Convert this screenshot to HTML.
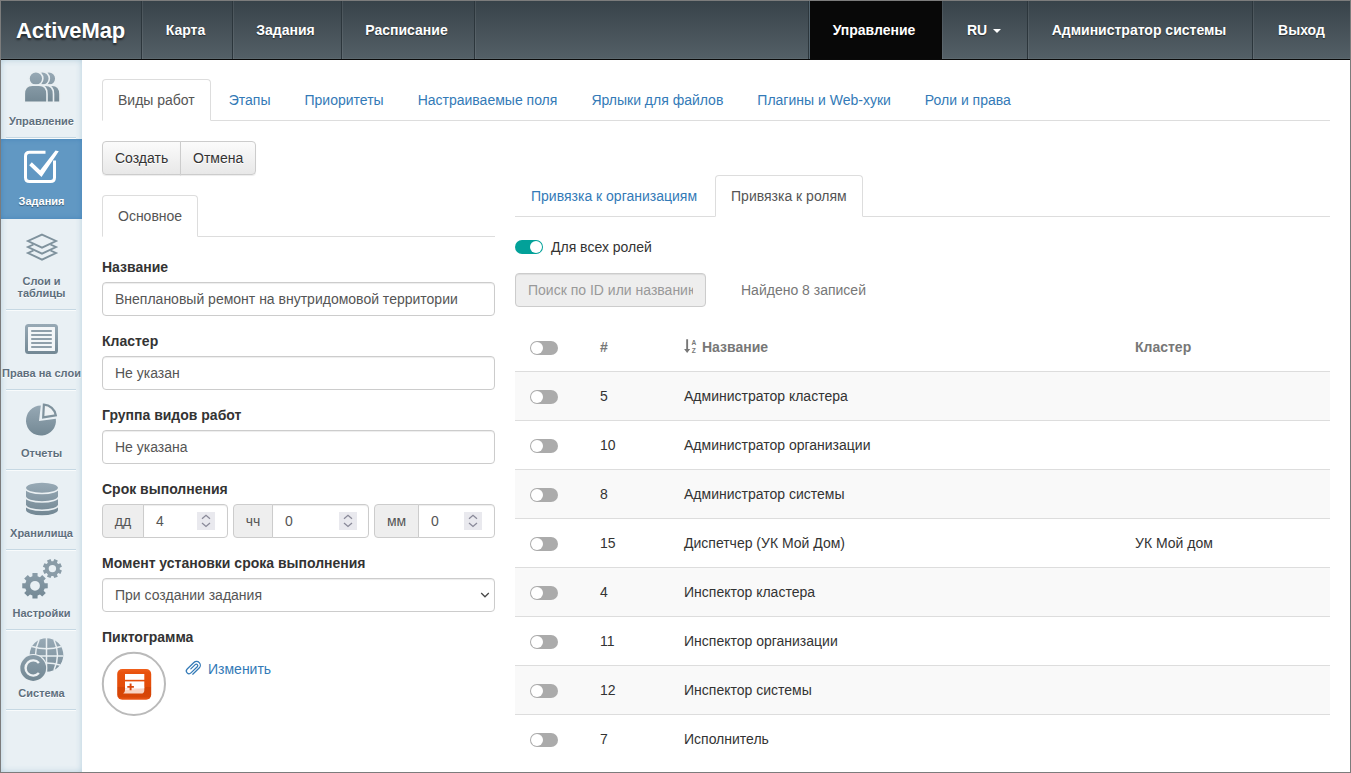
<!DOCTYPE html>
<html lang="ru">
<head>
<meta charset="utf-8">
<title>ActiveMap</title>
<style>
*{box-sizing:border-box}
html,body{margin:0;padding:0}
body{width:1351px;height:773px;overflow:hidden;position:relative;background:#fff;font-family:"Liberation Sans",Arial,sans-serif;font-size:14px;line-height:20px;color:#333}
a{color:#337ab7;text-decoration:none}
#frame{position:absolute;left:0;top:0;width:1351px;height:773px;border:1px solid #7c7c7c;z-index:50;pointer-events:none}
/* header */
#hdr{position:absolute;left:1px;top:1px;width:1349px;height:59px;background:linear-gradient(#38434a,#546067);border-bottom:1px solid #0a0a0a;box-shadow:inset 0 -1px 0 rgba(255,255,255,.05)}
#hdr .it{position:absolute;top:0;height:58px;line-height:59px;color:#fff;font-weight:bold;font-size:14px;text-align:center;border-left:1px solid #2c363c;box-shadow:inset 1px 0 0 rgba(255,255,255,.08);text-shadow:0 1px 1px rgba(0,0,0,.5);white-space:nowrap;padding-right:3px}
#brand{position:absolute;letter-spacing:-.1px;left:15px;top:0;height:58px;line-height:60px;font-size:22px;font-weight:bold;color:#fff;text-shadow:0 2px 2px rgba(0,0,0,.55)}
#hdr .act{background:#080808;box-shadow:inset 1px 0 0 #55656f}
.caret{display:inline-block;width:0;height:0;border-left:4px solid transparent;border-right:4px solid transparent;border-top:4px solid #fff;vertical-align:middle;margin-left:2px}
/* sidebar */
#side{position:absolute;left:1px;top:60px;width:81px;height:712px;background:#e9f0f4;box-shadow:inset 0 0 6px 0 #b5cfde}
#side .si{position:absolute;left:0;width:81px;height:80px;text-align:center;font-size:11px;font-weight:bold;color:#5e6f7d;line-height:12px}
#side .si .lb{position:absolute;left:0;width:81px;text-align:center;text-shadow:0 1px 0 #fff}
#side .si svg{position:absolute}
#side .sep{position:absolute;left:5px;width:70px;height:2px;background:linear-gradient(#c6d8e3 50%,#f8fbfc 50%)}
#side .on{background:#6198c3;box-shadow:inset 0 0 5px 0 #4685bb;color:#fff}
#side .on .lb{text-shadow:0 1px 1px rgba(0,0,0,.4)}
/* main */
.tabline{position:absolute;height:1px;background:#ddd}
.tabs{position:absolute;white-space:nowrap;font-size:0}
.tab{display:inline-block;height:42px;line-height:20px;padding:10px 15px;margin-right:2px;font-size:14px;white-space:nowrap;border:1px solid transparent;vertical-align:top;color:#337ab7}
.tab.on{border:1px solid #ddd;border-bottom:1px solid #fff;border-radius:4px 4px 0 0;color:#555;background:#fff}
.lbl{position:absolute;left:102px;font-weight:bold;font-size:14px;line-height:20px;white-space:nowrap}
.inp{position:absolute;height:34px;border:1px solid #ccc;border-radius:4px;background:#fff;box-shadow:inset 0 1px 1px rgba(0,0,0,.075);padding:6px 12px;line-height:20px;color:#555;white-space:nowrap;overflow:hidden}
.addon{position:absolute;height:34px;border:1px solid #ccc;border-radius:4px 0 0 4px;background:#eee;color:#555;text-align:center;line-height:32px}
.btn{position:absolute;height:34px;line-height:32px;padding:0 12px;border:1px solid #ccc;background:linear-gradient(#fbfbfb,#e8e8e8);color:#333;text-shadow:0 1px 0 #fff;box-shadow:inset 0 1px 0 rgba(255,255,255,.15),0 1px 1px rgba(0,0,0,.075)}
.spin{position:absolute;top:7px}
/* table */
.row{position:absolute;left:515px;width:815px;height:49px;border-top:1px solid #ddd}
.row.odd{background:#f9f9f9}
.row span{position:absolute;top:14px;line-height:20px;white-space:nowrap}
.row.hd span{top:15px;font-weight:bold;color:#777}
.inp.r{border-radius:0 4px 4px 0}
.sw{position:absolute;width:28px;height:14px;border-radius:7px;background:#ababab}
.sw i{position:absolute;left:1px;top:1px;width:12px;height:12px;border-radius:6px;background:#fff}
.sw.on{background:#02a199}
.sw.on i{left:15px}
</style>
</head>
<body>
<div id="hdr">
  <div id="brand">ActiveMap</div>
  <div class="it" style="left:140px;width:91px">Карта</div>
  <div class="it" style="left:231px;width:109px">Задания</div>
  <div class="it" style="left:340px;width:133px">Расписание</div>
  <div class="it" style="left:473px;width:334px"></div>
  <div class="it act" style="left:807px;width:134px">Управление</div>
  <div class="it" style="left:940px;width:87px;padding-right:2px;border-left-color:#080808">RU <span class="caret"></span></div>
  <div class="it" style="left:1026px;width:225px;padding-right:2px">Администратор системы</div>
  <div class="it" style="left:1251px;width:98px;padding-right:0">Выход</div>
</div>

<div id="side">
<div class="si" style="top:-1px;height:80px"><div class="lb" style="top:56px">Управление</div></div>
<div class="sep" style="top:77px"></div>
<div class="si on" style="top:79px;height:80px"><div class="lb" style="top:56px">Задания</div></div>
<div class="si" style="top:159px;height:92px"><div class="lb" style="top:56px">Слои и<br>таблицы</div></div>
<div class="sep" style="top:249px"></div>
<div class="si" style="top:251px;height:80px"><div class="lb" style="top:56px">Права на слои</div></div>
<div class="sep" style="top:329px"></div>
<div class="si" style="top:331px;height:80px"><div class="lb" style="top:56px">Отчеты</div></div>
<div class="sep" style="top:409px"></div>
<div class="si" style="top:411px;height:80px"><div class="lb" style="top:56px">Хранилища</div></div>
<div class="sep" style="top:489px"></div>
<div class="si" style="top:491px;height:80px"><div class="lb" style="top:56px">Настройки</div></div>
<div class="sep" style="top:569px"></div>
<div class="si" style="top:571px;height:80px"><div class="lb" style="top:56px">Система</div></div>
<div class="sep" style="top:649px"></div>
</div>
<svg id="sideico" width="84" height="773" viewBox="0 0 84 773" style="position:absolute;left:0;top:0">
<defs>
<linearGradient id="g0" gradientUnits="userSpaceOnUse" x1="0" y1="72" x2="0" y2="102"><stop offset="0" stop-color="#97a9b5"/><stop offset="1" stop-color="#738894"/></linearGradient>
<linearGradient id="g1" gradientUnits="userSpaceOnUse" x1="0" y1="324" x2="0" y2="354"><stop offset="0" stop-color="#97a9b5"/><stop offset="1" stop-color="#738894"/></linearGradient>
<linearGradient id="g2" gradientUnits="userSpaceOnUse" x1="0" y1="405" x2="0" y2="436"><stop offset="0" stop-color="#97a9b5"/><stop offset="1" stop-color="#738894"/></linearGradient>
<linearGradient id="g3" gradientUnits="userSpaceOnUse" x1="0" y1="483" x2="0" y2="515"><stop offset="0" stop-color="#97a9b5"/><stop offset="1" stop-color="#738894"/></linearGradient>
<linearGradient id="g4" gradientUnits="userSpaceOnUse" x1="0" y1="558" x2="0" y2="599"><stop offset="0" stop-color="#97a9b5"/><stop offset="1" stop-color="#738894"/></linearGradient>
<linearGradient id="g5" gradientUnits="userSpaceOnUse" x1="0" y1="638" x2="0" y2="682"><stop offset="0" stop-color="#97a9b5"/><stop offset="1" stop-color="#738894"/></linearGradient>
</defs>
<g fill="url(#g0)"><g stroke="#e9eff2" stroke-width="1.6"><circle cx="48.9" cy="78.6" r="6.95"/><path d="M37.3,101.4 V94 Q37.3,85.1 45.3,85.1 H52.0 Q60.0,85.1 60.0,94 V101.4 Q60.0,102.3 59.1,102.3 H38.2 Q37.3,102.3 37.3,101.4Z"/></g><g stroke="#e9eff2" stroke-width="1.6"><circle cx="42.4" cy="78.6" r="6.95"/><path d="M30.8,101.4 V94 Q30.8,85.1 38.8,85.1 H45.5 Q53.5,85.1 53.5,94 V101.4 Q53.5,102.3 52.6,102.3 H31.7 Q30.8,102.3 30.8,101.4Z"/></g><g stroke="#e9eff2" stroke-width="1.6"><circle cx="35.9" cy="78.6" r="6.95"/><path d="M24.3,101.4 V94 Q24.3,85.1 32.3,85.1 H39.0 Q47.0,85.1 47.0,94 V101.4 Q47.0,102.3 46.1,102.3 H25.2 Q24.3,102.3 24.3,101.4Z"/></g></g>
<g fill="none" stroke="#fff" stroke-linejoin="round"><path d="M45.5,152.3 H29.5 Q25.5,152.3 25.5,156.3 V177.5 Q25.5,181.5 29.5,181.5 H50.5 Q54.5,181.5 54.5,177.5 V160.5" stroke-width="3"/></g>
<path d="M29.2,165.2 L31.8,162.3 L40.2,170.2 L55.5,150.6 L58.8,151.2 L41.5,177 Z" fill="#fff"/>
<g fill="none" stroke="#7f929d" stroke-width="1.9" stroke-linejoin="miter"><path d="M42,234.6 L56,241 L42,247.6 L28,241Z"/><path d="M50.5,244.5 L56,247 L42,253.6 L28,247 L33.5,244.5"/><path d="M50.5,250.5 L56,253 L42,259.6 L28,253 L33.5,250.5"/></g>
<rect x="26.5" y="325.5" width="30" height="27" rx="2" fill="#f3f6f8" stroke="url(#g1)" stroke-width="3"/>
<rect x="31.2" y="330.1" width="20.6" height="1.8" fill="#8496a1"/>
<rect x="31.2" y="334.1" width="20.6" height="1.8" fill="#8496a1"/>
<rect x="31.2" y="338.1" width="20.6" height="1.8" fill="#8496a1"/>
<rect x="31.2" y="342.1" width="20.6" height="1.8" fill="#8496a1"/>
<rect x="31.2" y="346.1" width="20.6" height="1.8" fill="#8496a1"/>
<path d="M39.00,421.00 L40.83,405.61 A15,15 0 1,0 55.85,418.71 Z" fill="url(#g2)"/>
<path d="M43.20,417.40 L43.87,404.62 A12.8,12.8 0 0,1 55.84,415.40 Z" fill="#eef2f4" stroke="#7f929d" stroke-width="2.2" stroke-linejoin="miter"/>
<path d="M26,488 a16,5.2 0 0,1 32,0 V510 a16,5.2 0 0,1 -32,0Z" fill="url(#g3)"/>
<path d="M25.5,488.3 a16.5,5.2 0 0,0 33,0" fill="none" stroke="#e9eff2" stroke-width="1.6"/>
<path d="M25.5,496.8 a16.5,5.2 0 0,0 33,0" fill="none" stroke="#e9eff2" stroke-width="1.6"/>
<path d="M25.5,505.1 a16.5,5.2 0 0,0 33,0" fill="none" stroke="#e9eff2" stroke-width="1.6"/>
<path d="M44.65,583.19 L47.75,583.24 L47.75,588.36 L44.65,588.41 L43.67,590.78 L45.82,593.01 L42.21,596.62 L39.98,594.47 L37.61,595.45 L37.56,598.55 L32.44,598.55 L32.39,595.45 L30.02,594.47 L27.79,596.62 L24.18,593.01 L26.33,590.78 L25.35,588.41 L22.25,588.36 L22.25,583.24 L25.35,583.19 L26.33,580.82 L24.18,578.59 L27.79,574.98 L30.02,577.13 L32.39,576.15 L32.44,573.05 L37.56,573.05 L37.61,576.15 L39.98,577.13 L42.21,574.98 L45.82,578.59 L43.67,580.82ZM30.10,585.80 a4.90,4.90 0 1,0 9.80,0 a4.90,4.90 0 1,0 -9.80,0Z" fill="url(#g4)" fill-rule="evenodd"/>
<path d="M59.74,569.55 L61.92,570.48 L60.46,574.00 L58.26,573.12 L56.92,574.46 L57.80,576.66 L54.28,578.12 L53.35,575.94 L51.45,575.94 L50.52,578.12 L47.00,576.66 L47.88,574.46 L46.54,573.12 L44.34,574.00 L42.88,570.48 L45.06,569.55 L45.06,567.65 L42.88,566.72 L44.34,563.20 L46.54,564.08 L47.88,562.74 L47.00,560.54 L50.52,559.08 L51.45,561.26 L53.35,561.26 L54.28,559.08 L57.80,560.54 L56.92,562.74 L58.26,564.08 L60.46,563.20 L61.92,566.72 L59.74,567.65ZM48.70,568.60 a3.70,3.70 0 1,0 7.40,0 a3.70,3.70 0 1,0 -7.40,0Z" fill="#8a9ca7" fill-rule="evenodd"/>
<circle cx="46.5" cy="655" r="16.8" fill="url(#g5)"/>
<g fill="none" stroke="#e9eff2" stroke-width="1.5"><path d="M46.5,638 V672"/><path d="M39,640 Q32,655 39,670"/><path d="M54,640 Q61,655 54,670"/><path d="M32,646.5 Q46.5,651 61,646.5"/><path d="M30,656 H63"/><path d="M33,665 Q46.5,661 60,665"/></g>
<circle cx="33.2" cy="668" r="14" fill="#e9eff2"/>
<circle cx="33.2" cy="668" r="12.9" fill="url(#g5)"/>
<path d="M38.9,663 A7.6,7.6 0 1,0 38.9,673" fill="none" stroke="#eef2f4" stroke-width="2.4"/>
</svg>

<div id="main">
<div class="tabline" style="left:102px;top:120px;width:1228px"></div>
<div class="tabs" style="left:102px;top:79px"><span class="tab on">Виды работ</span><a class="tab">Этапы</a><a class="tab">Приоритеты</a><a class="tab">Настраиваемые поля</a><a class="tab">Ярлыки для файлов</a><a class="tab">Плагины и Web-хуки</a><a class="tab">Роли и права</a></div>
<div class="btn" style="left:102px;top:141px;width:79px;border-radius:4px 0 0 4px">Создать</div>
<div class="btn" style="left:180px;top:141px;width:76px;border-radius:0 4px 4px 0">Отмена</div>
<div class="tabline" style="left:102px;top:236px;width:393px"></div>
<div class="tabs" style="left:102px;top:195px"><span class="tab on">Основное</span></div>
<div class="lbl" style="top:257px">Название</div>
<div class="inp" style="left:102px;top:282px;width:393px">Внеплановый ремонт на внутридомовой территории</div>
<div class="lbl" style="top:331px">Кластер</div>
<div class="inp" style="left:102px;top:356px;width:393px">Не указан</div>
<div class="lbl" style="top:405px">Группа видов работ</div>
<div class="inp" style="left:102px;top:430px;width:393px">Не указана</div>
<div class="lbl" style="top:479px">Срок выполнения</div>
<div class="addon" style="left:102px;top:504px;width:42px">дд</div>
<div class="inp r" style="left:143px;top:504px;width:85px">4<svg class="spin" style="left:53px" width="18" height="18" viewBox="0 0 18 18"><rect width="18" height="18" fill="#e9e9ee"/><path d="M5,6.8 L9,3.3 L13,6.8 M5,11 L9,14.5 L13,11" fill="none" stroke="#8a8a99" stroke-width="1.3"/></svg></div>
<div class="addon" style="left:233px;top:504px;width:40px">чч</div>
<div class="inp r" style="left:272px;top:504px;width:97px">0<svg class="spin" style="left:65.5px" width="18" height="18" viewBox="0 0 18 18"><rect width="18" height="18" fill="#e9e9ee"/><path d="M5,6.8 L9,3.3 L13,6.8 M5,11 L9,14.5 L13,11" fill="none" stroke="#8a8a99" stroke-width="1.3"/></svg></div>
<div class="addon" style="left:374px;top:504px;width:45px">мм</div>
<div class="inp r" style="left:418px;top:504px;width:77px">0<svg class="spin" style="left:45px" width="18" height="18" viewBox="0 0 18 18"><rect width="18" height="18" fill="#e9e9ee"/><path d="M5,6.8 L9,3.3 L13,6.8 M5,11 L9,14.5 L13,11" fill="none" stroke="#8a8a99" stroke-width="1.3"/></svg></div>
<div class="lbl" style="top:553px">Момент установки срока выполнения</div>
<div class="inp" style="left:102px;top:578px;width:393px">При создании задания<svg style="position:absolute;left:376px;top:12px" width="12" height="8" viewBox="0 0 12 8"><path d="M2.2,2 L6,5.8 L9.8,2" fill="none" stroke="#4a4a4a" stroke-width="1.3"/></svg></div>
<div class="lbl" style="top:627px">Пиктограмма</div>
<svg id="pic" style="position:absolute;left:100px;top:650px" width="70" height="70" viewBox="100 650 70 70">
<defs><linearGradient id="og" x1="0" y1="0" x2="0" y2="1"><stop offset="0" stop-color="#f0601c"/><stop offset=".12" stop-color="#e8520e"/><stop offset=".58" stop-color="#e34c08"/><stop offset=".6" stop-color="#d54405"/><stop offset=".9" stop-color="#d84607"/><stop offset="1" stop-color="#ee5a1a"/></linearGradient></defs>
<circle cx="133.9" cy="683.9" r="31.1" fill="#fff" stroke="#bababa" stroke-width="2"/>
<rect x="117.2" y="669" width="34" height="30.8" rx="5" fill="url(#og)"/>
<rect x="125" y="674" width="19.3" height="5.8" fill="#fff"/>
<path d="M125,681.4 H144.3 V688 H125Z" fill="#fff"/>
<path d="M125,688 H144.3 V690.5 Q144.3,693.6 141,693.6 H123.2 Q125,692.5 125,690Z" fill="#f8d3c3"/>
<path d="M125,688.5 L144.3,686.8 V688.6 L125,690.3Z" fill="#fff" opacity=".55"/>
<path d="M127.3,686.9 H133.9 M130.6,683.6 V690.2" stroke="#d9460a" stroke-width="1.9" fill="none"/>
</svg>
<svg style="position:absolute;left:183px;top:658px" width="20" height="18" viewBox="183 658 20 18"><g transform="translate(186.7,669.5) rotate(-44)"><path d="M3.4,2.4 H9.5 A1.5,1.5 0 0,1 9.5,5.4 H0.7 A2.7,2.7 0 0,1 0.7,0 H10 A3.8,3.8 0 0,1 10,7.6 H1.1" fill="none" stroke="#337ab7" stroke-width="1.25" stroke-linecap="round"/></g></svg>
<a style="position:absolute;left:208px;top:659px;line-height:20px">Изменить</a>
<div class="tabline" style="left:515px;top:216px;width:815px"></div>
<div class="tabs" style="left:515px;top:175px"><a class="tab">Привязка к организациям</a><span class="tab on">Привязка к ролям</span></div>
<div class="sw on" style="left:515px;top:240px"><i></i></div>
<div style="position:absolute;left:551px;top:237px;line-height:20px">Для всех ролей</div>
<div class="inp" style="left:515px;top:273px;width:191px;background:#eee;color:#999;box-shadow:inset 0 1px 1px rgba(0,0,0,.075)"><span style="display:block;overflow:hidden">Поиск по ID или названию</span></div>
<div style="position:absolute;left:741px;top:280px;line-height:20px;color:#777">Найдено 8 записей</div>
<div class="row hd" style="top:322px;border-top:0"><div class="sw" style="left:15px;top:19px"><i></i></div><span style="left:85px">#</span><svg style="position:absolute;left:168px;top:16px" width="16" height="16" viewBox="683 338 16 16"><path d="M686.2,339.3 h1.9 v9.7 h2.1 l-3.05,3.9 l-3.05,-3.9 h2.1z" fill="#777"/><text x="691.6" y="345.4" font-family="Liberation Sans,Arial,sans-serif" font-size="6.6" font-weight="bold" fill="#777">A</text><text x="691.8" y="352.6" font-family="Liberation Sans,Arial,sans-serif" font-size="6.6" font-weight="bold" fill="#777">Z</text></svg><span style="left:187px">Название</span><span style="left:620px">Кластер</span></div>
<div class="row odd" style="top:371px"><div class="sw" style="left:15px;top:18px"><i></i></div><span style="left:85px">5</span><span style="left:169px">Администратор кластера</span></div>
<div class="row" style="top:420px"><div class="sw" style="left:15px;top:18px"><i></i></div><span style="left:85px">10</span><span style="left:169px">Администратор организации</span></div>
<div class="row odd" style="top:469px"><div class="sw" style="left:15px;top:18px"><i></i></div><span style="left:85px">8</span><span style="left:169px">Администратор системы</span></div>
<div class="row" style="top:518px"><div class="sw" style="left:15px;top:18px"><i></i></div><span style="left:85px">15</span><span style="left:169px">Диспетчер (УК Мой Дом)</span><span style="left:620px">УК Мой дом</span></div>
<div class="row odd" style="top:567px"><div class="sw" style="left:15px;top:18px"><i></i></div><span style="left:85px">4</span><span style="left:169px">Инспектор кластера</span></div>
<div class="row" style="top:616px"><div class="sw" style="left:15px;top:18px"><i></i></div><span style="left:85px">11</span><span style="left:169px">Инспектор организации</span></div>
<div class="row odd" style="top:665px"><div class="sw" style="left:15px;top:18px"><i></i></div><span style="left:85px">12</span><span style="left:169px">Инспектор системы</span></div>
<div class="row" style="top:714px"><div class="sw" style="left:15px;top:18px"><i></i></div><span style="left:85px">7</span><span style="left:169px">Исполнитель</span></div>
</div>
<div id="frame"></div>
</body>
</html>
